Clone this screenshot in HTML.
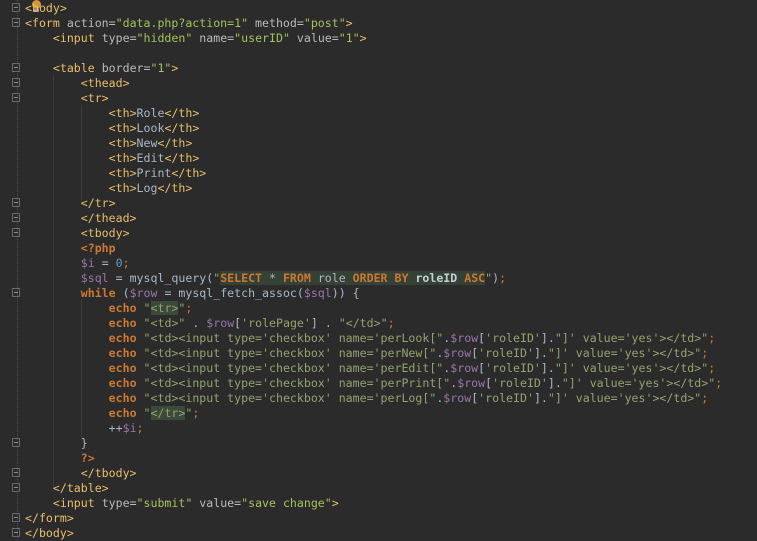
<!DOCTYPE html>
<html><head><meta charset="utf-8"><style>
html,body{margin:0;padding:0;background:#2b2b2b;width:757px;height:540px;overflow:hidden}
#code{position:absolute;left:25px;top:0.5px;font-family:"DejaVu Sans Mono","Liberation Mono",monospace;font-size:11.58px;line-height:15px;color:#a9b7c6;white-space:pre}
.t{color:#e8bf6a}.a{color:#bababa}.v{color:#a5c25c}.k{color:#cc7832;font-weight:bold}.p{color:#9876aa}.n{color:#6897bb}.s{color:#93a36e}
.sq{background:#364135}.sk{color:#cc7832;font-weight:bold}.sb{color:#c5cfd8;font-weight:bold}.hl{background:#3b4a3a}.sc{color:#cc7832}
.g{position:absolute;width:1px;background:#3a3a3a}
.f{position:absolute;left:12px;width:8px;height:9px;border:1px solid #6a6a6a;border-radius:1px;box-sizing:border-box}
.f:after{content:"";position:absolute;left:1px;top:3px;width:4px;height:1px;background:#8a8a8a}
</style></head><body>
<div style="position:absolute;left:17px;top:0;height:540px;border-left:1px dotted #4a4a4a"></div>
<div class="g" style="left:53px;top:75px;height:412px"></div>
<div class="g" style="left:81px;top:105px;height:97px"></div>
<div class="g" style="left:81px;top:300px;height:140px"></div>
<div class="f" style="top:3px"></div><div class="f" style="top:18px"></div><div class="f" style="top:63px"></div><div class="f" style="top:78px"></div><div class="f" style="top:93px"></div><div class="f" style="top:198px"></div><div class="f" style="top:213px"></div><div class="f" style="top:228px"></div><div class="f" style="top:288px"></div><div class="f" style="top:438px"></div><div class="f" style="top:468px"></div><div class="f" style="top:483px"></div><div class="f" style="top:513px"></div><div class="f" style="top:528px"></div>
<div style="position:absolute;left:32px;top:0;width:9px;height:9px;border-radius:50%;background:#e8a23a;opacity:.9"></div>
<div style="position:absolute;left:34px;top:9px;width:5px;height:3px;background:#9a9a9a"></div>
<div id="code"><span class="t">&lt;body&gt;</span>
<span class="t">&lt;form </span><span class="a">action=</span><span class="v">"data.php?action=1" </span><span class="a">method=</span><span class="v">"post"</span><span class="t">&gt;</span>
    <span class="t">&lt;input </span><span class="a">type=</span><span class="v">"hidden" </span><span class="a">name=</span><span class="v">"userID" </span><span class="a">value=</span><span class="v">"1"</span><span class="t">&gt;</span>

    <span class="t">&lt;table </span><span class="a">border=</span><span class="v">"1"</span><span class="t">&gt;</span>
        <span class="t">&lt;thead&gt;</span>
        <span class="t">&lt;tr&gt;</span>
            <span class="t">&lt;th&gt;</span>Role<span class="t">&lt;/th&gt;</span>
            <span class="t">&lt;th&gt;</span>Look<span class="t">&lt;/th&gt;</span>
            <span class="t">&lt;th&gt;</span>New<span class="t">&lt;/th&gt;</span>
            <span class="t">&lt;th&gt;</span>Edit<span class="t">&lt;/th&gt;</span>
            <span class="t">&lt;th&gt;</span>Print<span class="t">&lt;/th&gt;</span>
            <span class="t">&lt;th&gt;</span>Log<span class="t">&lt;/th&gt;</span>
        <span class="t">&lt;/tr&gt;</span>
        <span class="t">&lt;/thead&gt;</span>
        <span class="t">&lt;tbody&gt;</span>
        <span class="k">&lt;?php</span>
        <span class="p">$i</span> = <span class="n">0</span><span class="sc">;</span>
        <span class="p">$sql</span> = mysql_query(<span class="s">"</span><span class="sq"><span class="sk">SELECT</span> * <span class="sk">FROM</span> role <span class="sk">ORDER BY</span> <span class="sb">roleID</span> <span class="sk">ASC</span></span><span class="s">"</span>)<span class="sc">;</span>
        <span class="k">while</span> (<span class="p">$row</span> = mysql_fetch_assoc(<span class="p">$sql</span>)) {
            <span class="k">echo</span> <span class="s">"<span class="hl">&lt;tr&gt;</span>"</span><span class="sc">;</span>
            <span class="k">echo</span> <span class="s">"&lt;td&gt;"</span> . <span class="p">$row</span>[<span class="s">'rolePage'</span>] . <span class="s">"&lt;/td&gt;"</span><span class="sc">;</span>
            <span class="k">echo</span> <span class="s">"&lt;td&gt;&lt;input type='checkbox' name='perLook["</span>.<span class="p">$row</span>[<span class="s">'roleID'</span>].<span class="s">"]' value='yes'&gt;&lt;/td&gt;"</span><span class="sc">;</span>
            <span class="k">echo</span> <span class="s">"&lt;td&gt;&lt;input type='checkbox' name='perNew["</span>.<span class="p">$row</span>[<span class="s">'roleID'</span>].<span class="s">"]' value='yes'&gt;&lt;/td&gt;"</span><span class="sc">;</span>
            <span class="k">echo</span> <span class="s">"&lt;td&gt;&lt;input type='checkbox' name='perEdit["</span>.<span class="p">$row</span>[<span class="s">'roleID'</span>].<span class="s">"]' value='yes'&gt;&lt;/td&gt;"</span><span class="sc">;</span>
            <span class="k">echo</span> <span class="s">"&lt;td&gt;&lt;input type='checkbox' name='perPrint["</span>.<span class="p">$row</span>[<span class="s">'roleID'</span>].<span class="s">"]' value='yes'&gt;&lt;/td&gt;"</span><span class="sc">;</span>
            <span class="k">echo</span> <span class="s">"&lt;td&gt;&lt;input type='checkbox' name='perLog["</span>.<span class="p">$row</span>[<span class="s">'roleID'</span>].<span class="s">"]' value='yes'&gt;&lt;/td&gt;"</span><span class="sc">;</span>
            <span class="k">echo</span> <span class="s">"<span class="hl">&lt;/tr&gt;</span>"</span><span class="sc">;</span>
            ++<span class="p">$i</span><span class="sc">;</span>
        }
        <span class="k">?&gt;</span>
        <span class="t">&lt;/tbody&gt;</span>
    <span class="t">&lt;/table&gt;</span>
    <span class="t">&lt;input </span><span class="a">type=</span><span class="v">"submit" </span><span class="a">value=</span><span class="v">"save change"</span><span class="t">&gt;</span>
<span class="t">&lt;/form&gt;</span>
<span class="t">&lt;/body&gt;</span></div>
</body></html>
